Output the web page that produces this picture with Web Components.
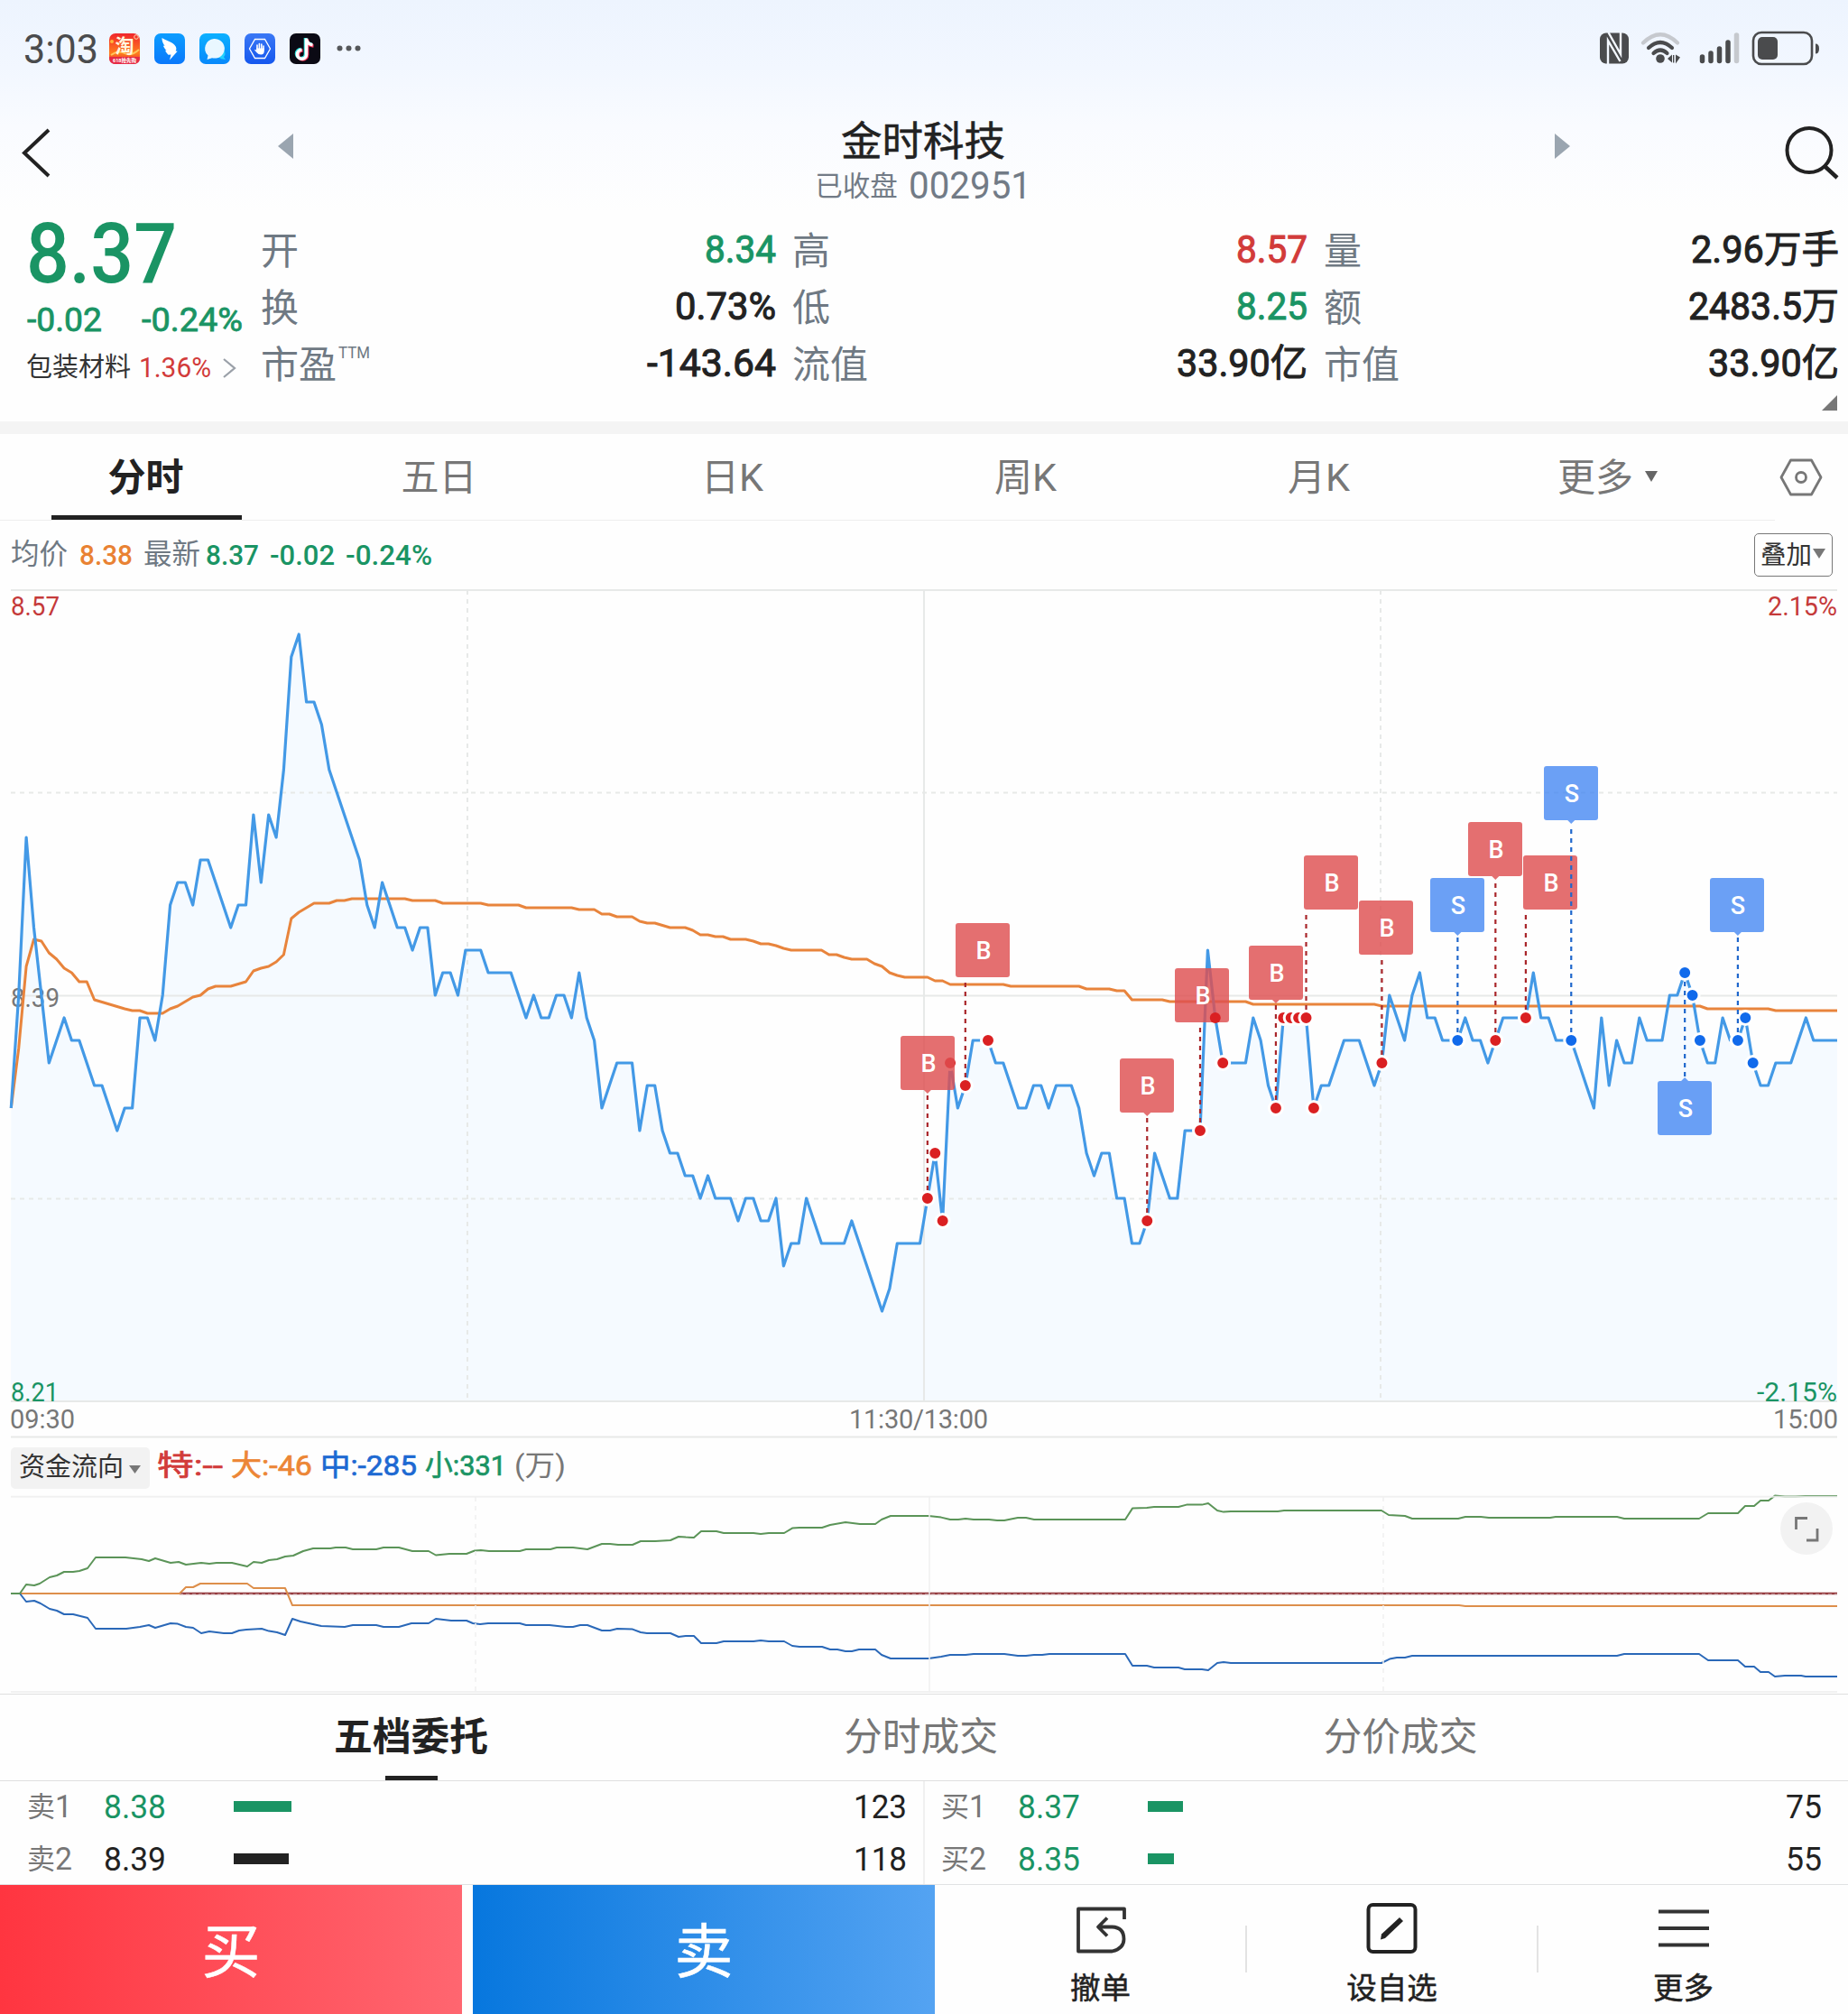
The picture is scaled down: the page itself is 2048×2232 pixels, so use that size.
<!DOCTYPE html>
<html lang="zh-CN">
<head>
<meta charset="utf-8">
<title>金时科技 002951</title>
<style>
html, body { margin: 0; padding: 0; }
body {
  width: 2048px;
  height: 2232px;
  overflow: hidden;
  display: flex;
  flex-direction: column;
  background: linear-gradient(#edf4fe 0, #f2f7ff 75px, #f9fbff 140px, #fefefe 235px, #fefefe 100%);
  font-family: Roboto, "Noto Sans CJK SC", sans-serif;
  color: #222;
  --up: #d23b3a;
  --down: #1a9464;
  --label: #6f7983;
}
</style>
</head>
<body>
<status-bar></status-bar>
<stock-header name="金时科技" state="已收盘" code="002951"></stock-header>
<quote-panel>
  <quote-item slot="c1" label="开"><fit-text w="79" class="down">8.34</fit-text></quote-item>
  <quote-item slot="c1" label="换"><fit-text w="112">0.73%</fit-text></quote-item>
  <quote-item slot="c1" label="市盈" sup="TTM"><fit-text w="143">-143.64</fit-text></quote-item>
  <quote-item slot="c2" label="高"><fit-text w="79" class="up">8.57</fit-text></quote-item>
  <quote-item slot="c2" label="低"><fit-text w="79" class="down">8.25</fit-text></quote-item>
  <quote-item slot="c2" label="流值"><fit-text w="145">33.90亿</fit-text></quote-item>
  <quote-item slot="c3" label="量"><fit-text w="164">2.96万手</fit-text></quote-item>
  <quote-item slot="c3" label="额"><fit-text w="167">2483.5万</fit-text></quote-item>
  <quote-item slot="c3" label="市值"><fit-text w="145">33.90亿</fit-text></quote-item>
</quote-panel>
<period-tabs></period-tabs>
<price-legend></price-legend>
<price-chart></price-chart>
<flow-legend></flow-legend>
<flow-chart></flow-chart>
<order-tabs></order-tabs>
<order-book>
  <order-row slot="sell" name="卖1" price="8.38" size="64" qty="123" qw="59"></order-row>
  <order-row slot="sell" name="卖2" price="8.39" size="61" qty="118" qw="59" flat></order-row>
  <order-row slot="buy" name="买1" price="8.37" size="39" qty="75" qw="40"></order-row>
  <order-row slot="buy" name="买2" price="8.35" size="29" qty="55" qw="40"></order-row>
</order-book>
<action-bar></action-bar>

<script>
function define (name, html) {
  window.customElements.define(name, class extends HTMLElement {
    constructor () {
      super()
      this.attachShadow({ mode: 'open' })
      const get = (key) => this.getAttribute(key) || ''
      this.shadowRoot.innerHTML = typeof html === 'function' ? html(get, this) : html
    }
  })
}

define('status-bar', `
<style>
:host { display: flex; align-items: center; height: 108px; padding: 0 31px 0 26px; color: #4a4b4d; flex: none; box-sizing: border-box; }
.time { font-size: 45px; line-height: 60px; margin-right: 12px; padding-top: 2px; }
.apps { display: flex; gap: 16px; }
.apps svg { width: 34px; height: 34px; display: block; }
.more { margin-left: 17px; }
.right { margin-left: auto; display: flex; align-items: center; }
svg { display: block; }
</style>
<fit-text class="time" w="83">3:03</fit-text>
<div class="apps">
  <svg viewBox="0 0 34 34">
    <defs><linearGradient id="tb" x2="0" y2="1"><stop offset="0" stop-color="#f0252c"/><stop offset=".65" stop-color="#ff7d1c"/><stop offset="1" stop-color="#e21d3c"/></linearGradient></defs>
    <rect width="34" height="34" rx="7" fill="url(#tb)"/>
    <path d="M0 26h34v1q0 7-7 7H7q-7 0-7-7z" fill="#e62a45"/>
    <circle cx="30" cy="4" r="2.3" fill="none" stroke="#ffd7b0"/><circle cx="3" cy="9" r="2" fill="#ffb53a"/>
    <path d="M2 24q8-6 15-2t16-4" stroke="#ffc65a" stroke-width="2" fill="none"/>
    <text x="17" y="21" font-size="21" font-weight="700" text-anchor="middle" fill="#fff6df">淘</text>
    <text x="17" y="31.500" font-size="6" font-weight="700" text-anchor="middle" fill="#fff" textLength="26" lengthAdjust="spacingAndGlyphs">618抢先购</text>
  </svg>
  <svg viewBox="0 0 34 34">
    <defs><linearGradient id="dd" x2="0" y2="1"><stop offset="0" stop-color="#0c9dff"/><stop offset="1" stop-color="#0a78fb"/></linearGradient></defs>
    <rect width="34" height="34" rx="7" fill="url(#dd)"/>
    <path d="M8.500 5c4 3 12.500 4.500 15.200 9.500 1 2 .8 3.500 0 5l2 .3L17 29.500l1.500-6-3 .2c-2-2-3-3.500-3.300-5l1.300.2c-2-1.800-3.300-3.600-3.600-5.300l1.700.4C9.500 11 8.300 8 8.500 5z" fill="#fff"/>
  </svg>
  <svg viewBox="0 0 34 34">
    <defs><linearGradient id="ms" x2="0" y2="1"><stop offset="0" stop-color="#0cb0ff"/><stop offset="1" stop-color="#0889fb"/></linearGradient></defs>
    <rect width="34" height="34" rx="7" fill="url(#ms)"/>
    <circle cx="23.500" cy="22.500" r="5" fill="#22d2ff"/><path d="M26 25l3 4-6-1z" fill="#22d2ff"/>
    <path d="M16 6a11 10.800 0 1 1-2 21.200L8.500 29l1-4.500A11 10.800 0 0 1 16 6z" fill="#e9f7ff"/>
  </svg>
  <svg viewBox="0 0 34 34">
    <defs><linearGradient id="hs" x2="0" y2="1"><stop offset="0" stop-color="#3a78f5"/><stop offset="1" stop-color="#1557ee"/></linearGradient></defs>
    <rect width="34" height="34" rx="7" fill="url(#hs)"/>
    <path d="M11.500 6.500h11L28.500 17l-6 10.500h-11L5.500 17z" fill="none" stroke="#fff" stroke-width="1.300"/>
    <path d="M14 18v-5M16.400 18v-6.500M18.800 18v-6M21 18v-4" stroke="#fff" stroke-width="1.600" stroke-linecap="round"/>
    <path d="M13.200 16.500h8.600v3q0 4-3.600 4-3 0-4.200-1.800L11 18.500q.8-1 2.200.2z" fill="#fff"/>
  </svg>
  <svg viewBox="0 0 34 34">
    <rect width="34" height="34" rx="7" fill="#0b0a14"/>
    <g fill="none" stroke-width="3.600">
      <path d="M17.500 5v17.500a5 5 0 1 1-5-5M17.500 6q1 5.500 7 6" stroke="#28ded8"/>
      <path d="M19.500 6.500V24a5 5 0 1 1-5-5M19.500 8q1 5.500 7 6" stroke="#f8355a"/>
      <path d="M18.500 5.500v17.700a5 5 0 1 1-5-5M18.500 6.500q1 5.500 7 6.200" stroke="#fff"/>
    </g>
  </svg>
</div>
<svg class="more" width="30" height="8"><circle cx="4.500" cy="3.500" r="3" fill="#55575a"/><circle cx="14.500" cy="3.500" r="3" fill="#55575a"/><circle cx="24.500" cy="3.500" r="3" fill="#55575a"/></svg>
<div class="right">
  <svg width="246" height="40" viewBox="0 0 246 40">
    <rect x="2" y="2.500" width="32" height="34" rx="7" fill="#4a4b4d"/>
    <path d="M11 37V11L24.500 34M11.500 2L25 26V2" fill="none" stroke="#f4f8ff" stroke-width="2.400"/>
    <g fill="none" stroke="#4a4b4d" stroke-width="4.200" stroke-linecap="round">
      <path d="M50 13.500Q69 -5 88 13.500" stroke="#c6c9ce"/>
      <path d="M56 19Q69 7 82 19"/><path d="M61.500 25Q69 18 76.500 25"/>
    </g>
    <circle cx="69" cy="31" r="4.800" fill="#4a4b4d"/>
    <path d="M77 31l5-4.500v9zM91 29.500l-5-3v10zM83 27v8.500h1.400V27z" fill="#4a4b4d"/>
    <g stroke="#4a4b4d" stroke-width="5.500" stroke-linecap="round">
      <path d="M115.500 29v4.500M125 25v8.500M134.500 20v13.500M144 13v20.500"/><path d="M153.500 5v28.500" stroke="#c6c9ce"/>
    </g>
    <rect x="172" y="2" width="65" height="35" rx="9" fill="none" stroke="#4a4b4d" stroke-width="2.600"/>
    <rect x="177" y="7" width="22" height="25" rx="5" fill="#4a4b4d"/>
    <path d="M241 14.500q4 0 4 5.500t-4 5.500z" fill="#4a4b4d"/>
  </svg>
</div>
`)

define('stock-header', (get) => `
<style>
:host { display: flex; height: 122px; flex: none; align-items: flex-start; padding: 0 9px 0 23px; box-sizing: border-box; }
svg { display: block; flex: none; }
.back { margin-top: 32px; }
.prev { margin: 40px 0 0 249px; }
.mid { width: 600px; margin-left: 398px; display: flex; flex-direction: column; align-items: center; }
.name { font-size: 45.500px; line-height: 60px; margin-top: 20px; -webkit-text-stroke: .5px; }
.sub { display: flex; align-items: flex-end; color: #727b86; height: 38px; }
.state { font-size: 30.500px; line-height: 38px; margin-right: 12px; }
.code { font-size: 42px; line-height: 40px; }
.next { margin: 40px 0 0 400px; }
.find { margin: 30px 0 0 auto; }
</style>
<svg class="back" width="36" height="60" viewBox="0 0 36 60"><path d="M31 4L4 29.500 31 55" fill="none" stroke="#222" stroke-width="4"/></svg>
<svg class="prev" width="17" height="28"><path d="M0 14L17 0v28z" fill="#9aa5b0"/></svg>
<div class="mid">
  <div class="name">${get('name')}</div>
  <div class="sub"><span class="state">${get('state')}</span><fit-text class="code" w="136">${get('code')}</fit-text></div>
</div>
<svg class="next" width="17" height="28"><path d="M17 14L0 0v28z" fill="#9aa5b0"/></svg>
<svg class="find" width="62" height="62" viewBox="0 0 62 62"><circle cx="28" cy="28.500" r="24.500" fill="none" stroke="#222" stroke-width="4"/><path d="M45.500 46.500L59 59" stroke="#222" stroke-width="4.500"/></svg>
`)

define('quote-item', (get) => `
<style>
:host { display: flex; justify-content: space-between; height: 63px; line-height: 63px; font-size: 42px; font-weight: 400; color: #222; -webkit-text-stroke: 1px; }
.label { color: var(--label); display: flex; padding-top: 2px; -webkit-text-stroke: 0; }
.sup { font-size: 18px; line-height: 36px; margin-left: 2px; }
::slotted(.up) { color: var(--up); }
::slotted(.down) { color: var(--down); }
</style>
<span class="label">${get('label')}${get('sup') ? `<fit-text class="sup" w="35">${get('sup')}</fit-text>` : ''}</span><slot></slot>
`)

define('quote-panel', `
<style>
:host { display: flex; height: 251px; flex: none; border-bottom: 14px solid #f4f4f4; box-sizing: border-box; padding: 0 10px 0 29px; color: var(--down); font-weight: 500; position: relative; }
.left { width: 260px; }
.last { font-size: 93px; line-height: 104px; height: 100px; }
.diff { display: flex; justify-content: space-between; font-size: 37px; line-height: 49px; height: 48px; padding: 0 20px 0 1px; font-weight: 400; -webkit-text-stroke: .8px; }
.industry { display: flex; align-items: center; font-size: 29px; line-height: 59px; font-weight: 400; color: #333; }
.industry .up { color: var(--up); font-size: 31px; margin: 0 12px 0 9px; }
.cols { flex: 1; display: grid; grid-template-columns: 571px 571px 571px; column-gap: 18px; align-content: start; padding-top: 15px; }
.fold { position: absolute; right: 12px; bottom: 12px; }
</style>
<div class="left">
  <fit-text class="last" w="167">8.37</fit-text>
  <div class="diff"><fit-text w="83">-0.02</fit-text><fit-text w="112">-0.24%</fit-text></div>
  <div class="industry"><span>包装材料</span><fit-text class="up" w="80">1.36%</fit-text><svg width="16" height="24" viewBox="0 0 16 24"><path d="M2 2l12 10L2 22" fill="none" stroke="#9aa0a8" stroke-width="2.200"/></svg></div>
</div>
<div class="cols"><div><slot name="c1"></slot></div><div><slot name="c2"></slot></div><div><slot name="c3"></slot></div></div>
<svg class="fold" width="17" height="17"><path d="M17 0v17H0z" fill="#777"/></svg>
`)

define('period-tabs', `
<style>
:host { display: flex; height: 96px; flex: none; color: #777; font-size: 42px; line-height: 94px; }
.tab { width: 325px; padding: 2px 2px 0 0; display: flex; justify-content: center; position: relative; align-items: center; border-bottom: 1px solid #eee; box-sizing: border-box; }
.tab.more { width: 342px; padding-right: 29px; }
.active { color: #222; font-weight: 700; }
.active::after { content: ""; position: absolute; left: 57px; width: 211px; height: 5px; bottom: 0; background: #222; }
.arrow { margin: -3px 0 0 13px; }
.gear { margin: 26px 0 0 4px; }
</style>
<div class="tab active">分时</div><div class="tab">五日</div><div class="tab"><span>日</span><fit-text w="27">K</fit-text></div><div class="tab"><span>周</span><fit-text w="27">K</fit-text></div><div class="tab"><span>月</span><fit-text w="27">K</fit-text></div>
<div class="tab more">更多<svg class="arrow" width="14" height="12"><path d="M0 0h14L7 12z" fill="#666"/></svg></div>
<svg class="gear" width="50" height="44" viewBox="0 0 50 44"><path d="M13.500 3h23L47 22 36.500 41h-23L3 22z" fill="none" stroke="#777" stroke-width="2.800" stroke-linejoin="round"/><circle cx="25" cy="22" r="5.500" fill="none" stroke="#777" stroke-width="2.800"/></svg>
`)

define('price-legend', `
<style>
:host { display: flex; height: 76px; flex: none; align-items: center; padding: 0 17px 0 12px; font-size: 32px; font-weight: 500; color: var(--down); box-sizing: border-box; line-height: 40px; }
.label { color: var(--label); font-size: 31.500px; font-weight: 400; }
.avg { color: #e98233; margin: 0 12px 0 13px; }
.last { margin: 0 12px 0 6px; }
.pct { margin-left: 12px; }
.overlay { margin-left: auto; width: 87px; height: 48px; box-sizing: border-box; border: 1.500px solid #777; border-radius: 5px; color: #333; font-weight: 400; font-size: 28.500px; line-height: 47px; display: flex; padding-left: 6px; white-space: nowrap; }
svg { margin: 16px 0 0 1px; flex: none; }
</style>
<span class="label">均价</span><fit-text class="avg" w="59">8.38</fit-text><span class="label">最新</span><fit-text class="last" w="59">8.37</fit-text><fit-text w="72">-0.02</fit-text><fit-text class="pct" w="96">-0.24%</fit-text>
<div class="overlay">叠加<svg width="14" height="11"><path d="M0 0h14L7 11z" fill="#777"/></svg></div>
`)

// minute by minute price in cents, "index:price", gaps are filled with straight segments
const PRICES = `0:834 1:839 2:846 3:842 4:839 5:836 6:837 7:838 8:837 9:837 10:836 11:835 12:835 13:834 14:833 15:834 16:834
17:838 18:838 19:837 20:839 21:843 22:844 23:844 24:843 25:845 26:845 27:844 28:843 29:842 30:843 31:843 32:847 33:844 34:847
35:846 36:849 37:854 38:855 39:852 40:852 41:851 42:849 43:848 44:847 45:846 46:845 47:843 48:842 49:844 50:843 51:842 52:842
53:841 54:842 55:842 56:839 57:840 58:840 59:839 60:841 62:841 63:840 66:840 67:839 68:838 69:839 70:838 71:838 72:839 73:839
74:838 75:840 76:838 77:837 78:834 79:835 80:836 82:836 83:833 84:835 85:835 86:833 87:832 88:832 89:831 90:831 91:830 92:831
93:830 95:830 96:829 97:830 98:830 99:829 100:829 101:830 102:827 103:828 104:828 105:830 106:829 107:828 110:828 111:829
112:828 113:827 114:826 115:825 116:826 117:828 120:828 121:830 122:832 123:829 124:836 125:834 126:835 127:837 129:837
130:836 131:836 132:835 133:834 134:834 135:835 136:835 137:834 138:835 140:835 141:834 142:832 143:831 144:832 145:832
146:830 147:830 148:828 149:828 150:829 151:832 152:831 153:830 154:830 155:833 157:833 158:841 159:838 160:836 163:836
164:838 165:837 166:835 167:834 168:838 171:838 172:834 173:835 174:835 175:836 176:837 178:837 179:836 180:835 181:836
182:839 183:838 184:837 185:839 186:840 187:838 188:838 189:837 191:837 192:838 193:837 194:837 195:836 196:837 197:838
200:838 201:840 202:838 203:838 204:837 206:837 207:836 208:835 209:834 210:838 211:835 212:837 213:836 214:836 215:838
216:837 218:837 219:839 220:839 221:840 222:839 223:837 224:836 225:836 226:838 227:837 228:837 229:838 230:836 231:835
232:835 233:836 235:836 236:837 237:838 238:837 241:837`

// average price, "index:y"
const AVERAGE = `0:1228 1:1162 2:1071 3:1041 4:1043 5:1056 6:1063 7:1073 8:1078 9:1088 10:1088 11:1108 13:1113 15:1118 16:1120
17:1120 18:1123 20:1123 21:1118 22:1115 23:1110 24:1105 25:1103 26:1096 27:1093 29:1093 31:1088 32:1076 33:1073 34:1071
35:1066 36:1058 37:1018 38:1011 40:1001 42:1001 43:998 44:998 45:996 52:996 53:998 56:998 57:1001 62:1001 63:1003 67:1003
68:1006 74:1006 75:1008 77:1008 78:1013 79:1013 80:1016 82:1016 83:1021 84:1023 85:1023 87:1028 89:1028 90:1031 91:1036
92:1036 93:1038 94:1038 95:1041 97:1041 98:1043 99:1046 100:1046 101:1048 102:1051 103:1053 107:1053 108:1058 109:1058
110:1061 111:1063 113:1063 114:1068 115:1071 116:1078 117:1081 118:1083 121:1083 122:1087 123:1087 124:1091 131:1091
132:1093 141:1093 142:1096 145:1096 146:1098 147:1098 148:1108 152:1108 153:1110 163:1110 164:1113 180:1113 181:1115
223:1115 224:1118 232:1118 233:1120 241:1120`

// side, minute index, label left, label top, arrow under the label
const TRADES = [
  ['B', 121, 998, 1148, true], ['B', 126, 1059, 1023, false], ['B', 150, 1241, 1173, true], ['B', 157, 1302, 1073, false],
  ['B', 167, 1384, 1048, true], ['B', 171, 1445, 948, false], ['B', 181, 1506, 998, false], ['S', 191, 1585, 973, true],
  ['B', 196, 1627, 911, true], ['B', 200, 1688, 948, false], ['S', 206, 1711, 849, true], ['S', 228, 1895, 973, true],
  ['S', 221, 1837, 1198, true]
]
const BUYS = [121, 122, 123, 124, 126, 129, 150, 157, 160, 167, 168, 169, 170, 171, 172, 181, 196, 200]
const SELLS = [191, 206, 221, 222, 223, 228, 229, 230]

const pairs = (text) => text.trim().split(/\s+/).map((p) => p.split(':').map(Number))
const chartX = (i) => 12.3 + i * 8.393
const chartY = (cents) => 1103 + (839 - cents) * 25

define('price-chart', () => {
  const prices = pairs(PRICES)
  const at = {}
  // fill the flat runs so every minute has a value
  prices.forEach(([i, c], n) => {
    at[i] = c
    const next = prices[n + 1]
    if (next) { for (let k = i + 1; k < next[0]; k++) { at[k] = c } }
  })
  const line = prices.map(([i, c]) => `${chartX(i).toFixed(1)},${chartY(c)}`).join(' ') + ' 2036,1153'
  const average = pairs(AVERAGE).map(([i, y]) => `${chartX(i).toFixed(1)},${y}`).join(' ') + ' 2036,1120'
  const dot = (i, color, ring = 3) => `<circle cx="${chartX(i)}" cy="${chartY(at[i])}" r="${ring ? 7.5 : 6}" fill="${color}" stroke="#fff" stroke-width="${ring}"/>`
  const dots = BUYS.map((i) => dot(i, '#da2022')).join('') + SELLS.map((i) => dot(i, '#116aeb')).join('')
  const labels = TRADES.map(([side, i, x, y, arrow]) => {
    const color = side === 'B' ? '#de4f50' : '#3f83f2'
    const px = chartX(i)
    const below = y > chartY(at[i])
    const tip = !arrow ? '' : below
      ? `<path d="M${px - 4} ${y}h8l-4 -4z"/>`
      : `<path d="M${px - 4} ${y + 60}h8l-4 4z"/>`
    return `<g fill="${color}" fill-opacity="${side === 'B' ? 0.82 : 0.77}"><rect x="${x}" y="${y}" width="60" height="60" rx="3"/>${tip}</g>
      <text x="${x + 31}" y="${y + 39.5}" text-anchor="middle" font-size="27" font-weight="500" fill="#fff">${side}</text>`
  }).join('')
  const stems = TRADES.map(([side, i, x, y, arrow]) => {
    const px = chartX(i)
    const py = chartY(at[i])
    const from = y > py ? y - 5 : y + (arrow ? 66 : 66)
    const to = y > py ? py + 10 : py - 9
    return `<path d="M${px} ${to}V${from}" stroke="${side === 'B' ? '#a9262a' : '#1f67cc'}" stroke-width="2.200" stroke-dasharray="5 5"/>`
  }).join('')
  return `
<style>
:host { display: block; flex: none; height: 941px; }
svg { display: block; font-family: Roboto, sans-serif; }
.axis { font-size: 29px; }
</style>
<svg width="2048" height="941" viewBox="0 653 2048 941">
  <polygon points="12,1553 ${line} 2036,1553" fill="#f5faff"/>
  <g stroke="#e7e9e8" stroke-width="2" fill="none">
    <path d="M12 654H2036M12 1103.500H2036M12 1553H2036M1024 654V1553"/>
    <path d="M12 878.500H2036M12 1328.500H2036M518 654V1553M1530 654V1553" stroke-dasharray="5 5"/>
    <path d="M12 1592.500H2036"/>
  </g>
  <text class="axis" x="12" y="1116" fill="#777" textLength="54" lengthAdjust="spacingAndGlyphs">8.39</text>
  <polyline points="${average}" fill="none" stroke="#e8843c" stroke-width="3" stroke-linejoin="round"/>
  <polyline points="${line}" fill="none" stroke="#4399e6" stroke-width="3.200" stroke-linejoin="round"/>
  ${dots}${labels}${dot(159, '#da2022', 0)}${stems}
  <g class="axis">
    <text x="12" y="682" fill="#c53a3a" textLength="54" lengthAdjust="spacingAndGlyphs">8.57</text>
    <text x="1959" y="682" fill="#c53a3a" textLength="77" lengthAdjust="spacingAndGlyphs">2.15%</text>
    <text x="12" y="1553" fill="#1a9464" textLength="53" lengthAdjust="spacingAndGlyphs">8.21</text>
    <text x="1947" y="1553" fill="#1a9464" textLength="89" lengthAdjust="spacingAndGlyphs">-2.15%</text>
    <g fill="#777">
      <text x="11" y="1583" textLength="72">09:30</text>
      <text x="941" y="1583" textLength="154">11:30/13:00</text>
      <text x="1965" y="1583" textLength="72">15:00</text>
    </g>
  </g>
</svg>`
})

define('flow-legend', `
<style>
:host { display: flex; flex: none; height: 64px; padding: 10px 0 0 12px; box-sizing: border-box; font-size: 32px; line-height: 41px; -webkit-text-stroke: .7px; }
.pick { width: 154px; height: 46px; background: #f2f2f2; border-radius: 5px; box-sizing: border-box; padding-left: 9px; font-size: 29px; line-height: 44px; color: #333; display: flex; margin-right: 8px; white-space: nowrap; -webkit-text-stroke: 0; }
.pick svg { margin: 20px 0 0 6px; }
fit-text { margin-right: 9px; }
</style>
<div class="pick">资金流向<svg width="13" height="9"><path d="M0 0h13L6.500 9z" fill="#777"/></svg></div>
<fit-text w="73" style="color:#d23b3a">特:--</fit-text><fit-text w="90" style="color:#ec8636">大:-46</fit-text><fit-text w="107" style="color:#1d69d2">中:-285</fit-text><fit-text w="90" style="color:#1a9464">小:331</fit-text><fit-text w="57" style="color:#777;-webkit-text-stroke:0">(万)</fit-text>
`)

// fund flow curves, "x:y"
const SMALL = `12:1766 22:1766 29:1756 38:1757 44:1755 55:1748 63:1746 71:1742 81:1742 88:1741 97:1738 106:1726 139:1726 157:1728
165:1730 172:1727 189:1732 198:1731 206:1734 223:1732 232:1733 240:1732 257:1732 274:1736 281:1731 290:1732 298:1729 307:1728
316:1725 325:1724 336:1719 347:1716 366:1716 372:1715 383:1715 391:1717 417:1717 425:1715 442:1715 457:1719 475:1719 483:1723.5
498:1722 517:1722 526:1718.5 533:1718 542:1719 576:1719 583:1717 610:1717 617:1715 635:1715 651:1717 667:1711 676:1711
685:1712 701:1712 710:1708 726:1708 743:1707 752:1703 760:1703.6 769:1704 777:1697 794:1697 802:1699 835:1699 843:1700
852:1699 869:1699 878:1693.6 886:1693 911:1693 920:1690 937:1687 953:1689 970:1689 977:1684 987:1680 1029:1680 1043:1681.6
1053:1684 1062:1684 1070:1683 1079:1684 1096:1684 1105:1685 1113:1685 1128:1682 1137:1682 1146:1684 1247:1684 1255:1671.6
1271:1671 1279:1670 1306:1670 1315:1667.6 1332:1667.6 1339:1666 1349:1674 1356:1675.6 1364:1675 1416:1675 1423:1674 1531:1674
1539:1679 1557:1680 1565:1683 1616:1683 1624:1681 1641:1681 1650:1682 1718:1682 1724:1681 1792:1681 1800:1683 1883:1683
1893:1677 1926:1677 1934:1669 1944:1669 1951:1663 1960:1663 1967:1657.6 1978:1658.5 1990:1658.5 2001:1658 2036:1658`
const MIDDLE = `22:1766 29:1775 38:1774 45:1777 55:1783 63:1785 71:1789 81:1789 97:1793 106:1805 140:1805 155:1803 165:1801 172:1804
189:1799 197:1799.6 206:1803 214:1804 223:1810 232:1808 248:1810 257:1810 265:1807 273:1806 290:1805 298:1807.6 307:1809
316:1812 324:1794 333:1797 356:1802 382:1803 391:1801 417:1801 425:1803 442:1803 456:1799 475:1799 483:1794 500:1796 517:1796
524:1799 532:1800 541:1799 576:1799 583:1801 609:1801 627:1803 635:1803 643:1801 651:1801 667:1807 676:1807 684:1805 701:1805.6
710:1809 717:1810 743:1810 752:1814 760:1813 769:1813 777:1821 794:1821 802:1819 835:1819 843:1818 852:1819 869:1819 878:1824
886:1825 911:1825 920:1828 928:1828 937:1830 944:1830 952:1828 970:1828 977:1834 987:1838 1029:1838 1043:1836 1053:1834
1070:1834 1079:1833 1113:1833 1128:1835 1137:1835 1146:1834 1155:1834 1163:1833 1247:1833 1255:1846 1271:1846 1279:1848
1306:1848 1313:1850 1332:1850 1339:1851 1349:1843 1356:1842 1364:1843 1531:1843 1540:1838.6 1548:1837 1557:1837 1565:1835
1792:1835 1800:1833 1883:1833 1893:1840 1926:1840 1934:1847 1944:1847 1951:1853 1960:1853 1967:1858 1978:1857 1996:1857
2001:1858 2036:1858`
const LARGE = '12:1766 199:1766 206:1759 214:1759 222:1755 274:1755 281:1760 316:1760 324:1779 1617:1779 1624:1780 2036:1780'
const curve = (text) => text.trim().replace(/\s+/g, ' ').replace(/:/g, ',')

define('flow-chart', `
<style>
:host { display: block; flex: none; height: 220px; position: relative; }
svg { display: block; }
.expand { position: absolute; left: 1973px; top: 7px; }
</style>
<svg width="2048" height="220" viewBox="0 1658 2048 220" style="overflow:visible">
  <g fill="none" stroke-width="2" stroke-linejoin="round">
    <path d="M199 1766H2036" stroke="#963c40" stroke-width="2.400"/>
    <path d="M199 1766.500H2036" stroke="#b9898c" stroke-width="1" stroke-dasharray="4 3"/>
    <polyline points="${curve(LARGE)}" stroke="#dd8f4b"/>
    <polyline points="${curve(MIDDLE)}" stroke="#2a68b8"/>
    <polyline points="${curve(SMALL)}" stroke="#5b9458"/>
  </g>
  <g fill="none" stroke="#efefef" stroke-width="2">
    <path d="M12 1658.800H2036M12 1875H2036" stroke-opacity=".85"/>
    <path d="M1030 1659V1876" stroke-width="1.500"/>
    <path d="M527 1659V1875M1533 1659V1875" stroke-dasharray="5 5" stroke-width="1.500"/>
  </g>
  <path d="M0 1877.500H2048" stroke="#dfdfdf"/>
</svg>
<svg class="expand" width="58" height="58"><circle cx="29" cy="29" r="29" fill="#f2f2f2"/><path d="M17.500 30V17.500H30M41 29v13H29" fill="none" stroke="#777" stroke-width="2.800"/></svg>
`)

define('order-tabs', `
<style>
:host { display: flex; flex: none; height: 96px; border-bottom: 1px solid #dfdfdf; box-sizing: border-box; padding-left: 173px; font-size: 42.800px; line-height: 95px; color: #777; text-align: center; }
div { width: 565px; position: relative; }
div:last-child { width: 498px; }
.active { color: #222; font-weight: 700; }
.active::after { content: ""; position: absolute; left: 254px; bottom: 0; width: 58px; height: 5px; background: #222; }
</style>
<div class="active">五档委托</div><div>分时成交</div><div>分价成交</div>
`)

define('order-row', (get, host) => `
<style>
:host { display: flex; align-items: center; height: 58px; line-height: 56px; font-size: 37px; }
.name { width: 85px; color: #777; font-size: 31px; display: flex; }
.name fit-text { font-size: 35px; }
.price { color: ${host.hasAttribute('flat') ? '#222' : 'var(--down)'}; margin-right: 75px; }
.bar { width: ${get('size')}px; height: 12px; background: ${host.hasAttribute('flat') ? '#222' : 'var(--down)'}; margin-bottom: 3px; }
.qty { margin-left: auto; }
</style>
<span class="name">${get('name')[0]}<fit-text w="19">${get('name')[1]}</fit-text></span><fit-text class="price" w="69">${get('price')}</fit-text><i class="bar"></i><fit-text class="qty" w="${get('qw')}">${get('qty')}</fit-text>
`)

define('order-book', `
<style>
:host { display: flex; flex: none; height: 115px; border-bottom: 1px solid #e0e2e4; box-sizing: border-box; }
div { width: 1023px; padding: 0 18px 0 30px; box-sizing: border-box; overflow: hidden; }
div:last-child { width: 1025px; border-left: 2px solid #f0f0f0; padding: 0 29px 0 18px; }
</style>
<div><slot name="sell"></slot></div><div><slot name="buy"></slot></div>
`)

define('action-bar', `
<style>
:host { display: flex; flex: none; height: 143px; color: #222; }
.trade { width: 512px; height: 143px; line-height: 150px; text-align: center; color: #fff; font-size: 65px; -webkit-text-stroke: .5px; }
.buy { background: linear-gradient(90deg, #ff3540, #ff6670); margin-right: 12px; }
.sell { background: linear-gradient(90deg, #0777de, #54a3f2); margin-right: 22px; }
.item { width: 323px; display: flex; flex-direction: column; align-items: center; font-size: 33.500px; line-height: 40px; position: relative; -webkit-text-stroke: .5px; }
.item svg { margin: 17px 0 16px; display: block; }
.item + .item::before { content: ""; position: absolute; left: -1px; top: 45px; height: 52px; width: 2px; background: #e3e3e3; }
</style>
<div class="trade buy">买</div><div class="trade sell">卖</div>
<div class="item"><svg width="64" height="62" viewBox="0 0 64 62"><path d="M58 21V9.500H7v47h37.500q13-3 13-13.500 0-13-13-13.500H30M39 19.500L29 29.500l10 10" fill="none" stroke="#333" stroke-width="3.800" stroke-linejoin="round"/></svg>撤单</div>
<div class="item"><svg width="64" height="62" viewBox="0 0 64 62"><rect x="5.500" y="5" width="52" height="52" rx="5" fill="none" stroke="#222" stroke-width="4"/><path d="M19 43.500l1-6L40 19l4 4-20 19z" fill="#222"/></svg>设自选</div>
<div class="item"><svg width="64" height="62" viewBox="0 0 64 62"><path d="M4 12.500h56M4 31h56M4 49.500h56" stroke="#333" stroke-width="4"/></svg>更多</div>
`)

/**
 * Text squeezed to the advance width given in the w attribute.
 * Defined last, so that fonts and slots around it are settled when it measures.
 */
class FitText extends HTMLElement {
  connectedCallback () {
    if (!this.shadowRoot) {
      this.attachShadow({ mode: 'open' })
      this.shadowRoot.innerHTML = `
<style>
:host { display: block; flex: none; white-space: nowrap; }
span { display: inline-block; transform-origin: 0 50%; vertical-align: top; }
</style>
<span><slot></slot></span>`
    }
    const span = this.shadowRoot.querySelector('span')
    const w = Number(this.getAttribute('w'))
    const natural = span.getBoundingClientRect().width
    this.style.width = w + 'px'
    if (natural) { span.style.transform = `scaleX(${w / natural})` }
  }
}
window.customElements.define('fit-text', FitText)
</script>
</body>
</html>
